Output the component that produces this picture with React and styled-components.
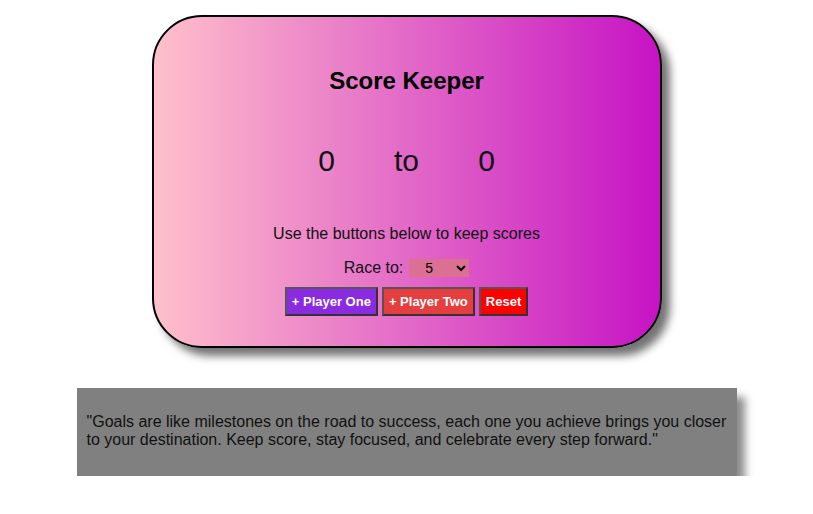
import { useState } from 'react'
import styled, { createGlobalStyle } from 'styled-components'

const GlobalStyle = createGlobalStyle`
  body {
    margin: 0;
    background: #fff;
    font-family: "Liberation Sans", Arial, sans-serif;
  }
`

const Page = styled.div`
  display: flex;
  flex-direction: column;
  align-items: center;
  padding-top: 15px;
`

const Card = styled.div`
  width: 506px;
  height: 329px;
  border: 2px solid #000;
  border-radius: 50px;
  background: linear-gradient(to right, #ffc0cb, #c613c4);
  box-shadow: 8px 8px 8px rgba(0, 0, 0, 0.55);
  display: flex;
  flex-direction: column;
  align-items: center;
`

const Title = styled.h1`
  margin: 50px 0 0;
  font-size: 24px;
  line-height: 28px;
  font-weight: bold;
  color: #000;
`

const Scores = styled.div`
  margin-top: 49px;
  display: flex;
  font-size: 30px;
  line-height: 34px;
  color: #111;
`

const ScoreItem = styled.span`
  width: 80px;
  text-align: center;
`

const Hint = styled.p`
  margin: 47px 0 0;
  font-size: 16px;
  line-height: 18px;
  color: #111;
`

const RaceRow = styled.label`
  margin-top: 15px;
  display: flex;
  align-items: center;
  gap: 6px;
  font-size: 16px;
  line-height: 20px;
  color: #111;
`

const Select = styled.select`
  width: 60px;
  height: 18px;
  border: none;
  background: #db7093;
  font-family: inherit;
  font-size: 14px;
  padding: 0 0 0 12px;
  color: #000;
`

const ButtonRow = styled.div`
  margin-top: 9px;
  display: flex;
  gap: 4px;
`

const Button = styled.button`
  height: 29px;
  padding: 0 5px;
  border: 2px solid #444;
  border-color: #555 #333 #333 #555;
  background: ${p => p.$bg};
  color: #fff;
  font-family: inherit;
  font-size: 13px;
  font-weight: bold;
  cursor: pointer;
`

const Quote = styled.div`
  margin-top: 40px;
  width: 640px;
  padding: 25px 10px 27px;
  background: #808080;
  box-shadow: 8px 9px 8px rgba(0, 0, 0, 0.45);
  font-size: 16px;
  line-height: 18px;
  color: #111;
`

export default function App() {
  const [p1, setP1] = useState(0)
  const [p2, setP2] = useState(0)
  const [target, setTarget] = useState(5)

  return (
    <Page>
      <GlobalStyle />
      <Card>
        <Title>Score Keeper</Title>
        <Scores>
          <ScoreItem>{p1}</ScoreItem>
          <ScoreItem>to</ScoreItem>
          <ScoreItem>{p2}</ScoreItem>
        </Scores>
        <Hint>Use the buttons below to keep scores</Hint>
        <RaceRow>
          Race to:
          <Select value={target} onChange={e => setTarget(Number(e.target.value))}>
            {[3, 5, 7, 10].map(n => <option key={n} value={n}>{n}</option>)}
          </Select>
        </RaceRow>
        <ButtonRow>
          <Button $bg="#8a2be2" onClick={() => p1 < target && setP1(p1 + 1)}>+ Player One</Button>
          <Button $bg="#e53e3e" onClick={() => p2 < target && setP2(p2 + 1)}>+ Player Two</Button>
          <Button $bg="#ff0000" onClick={() => { setP1(0); setP2(0) }}>Reset</Button>
        </ButtonRow>
      </Card>
      <Quote>
        "Goals are like milestones on the road to success, each one you achieve brings you closer
        to your destination. Keep score, stay focused, and celebrate every step forward."
      </Quote>
    </Page>
  )
}
